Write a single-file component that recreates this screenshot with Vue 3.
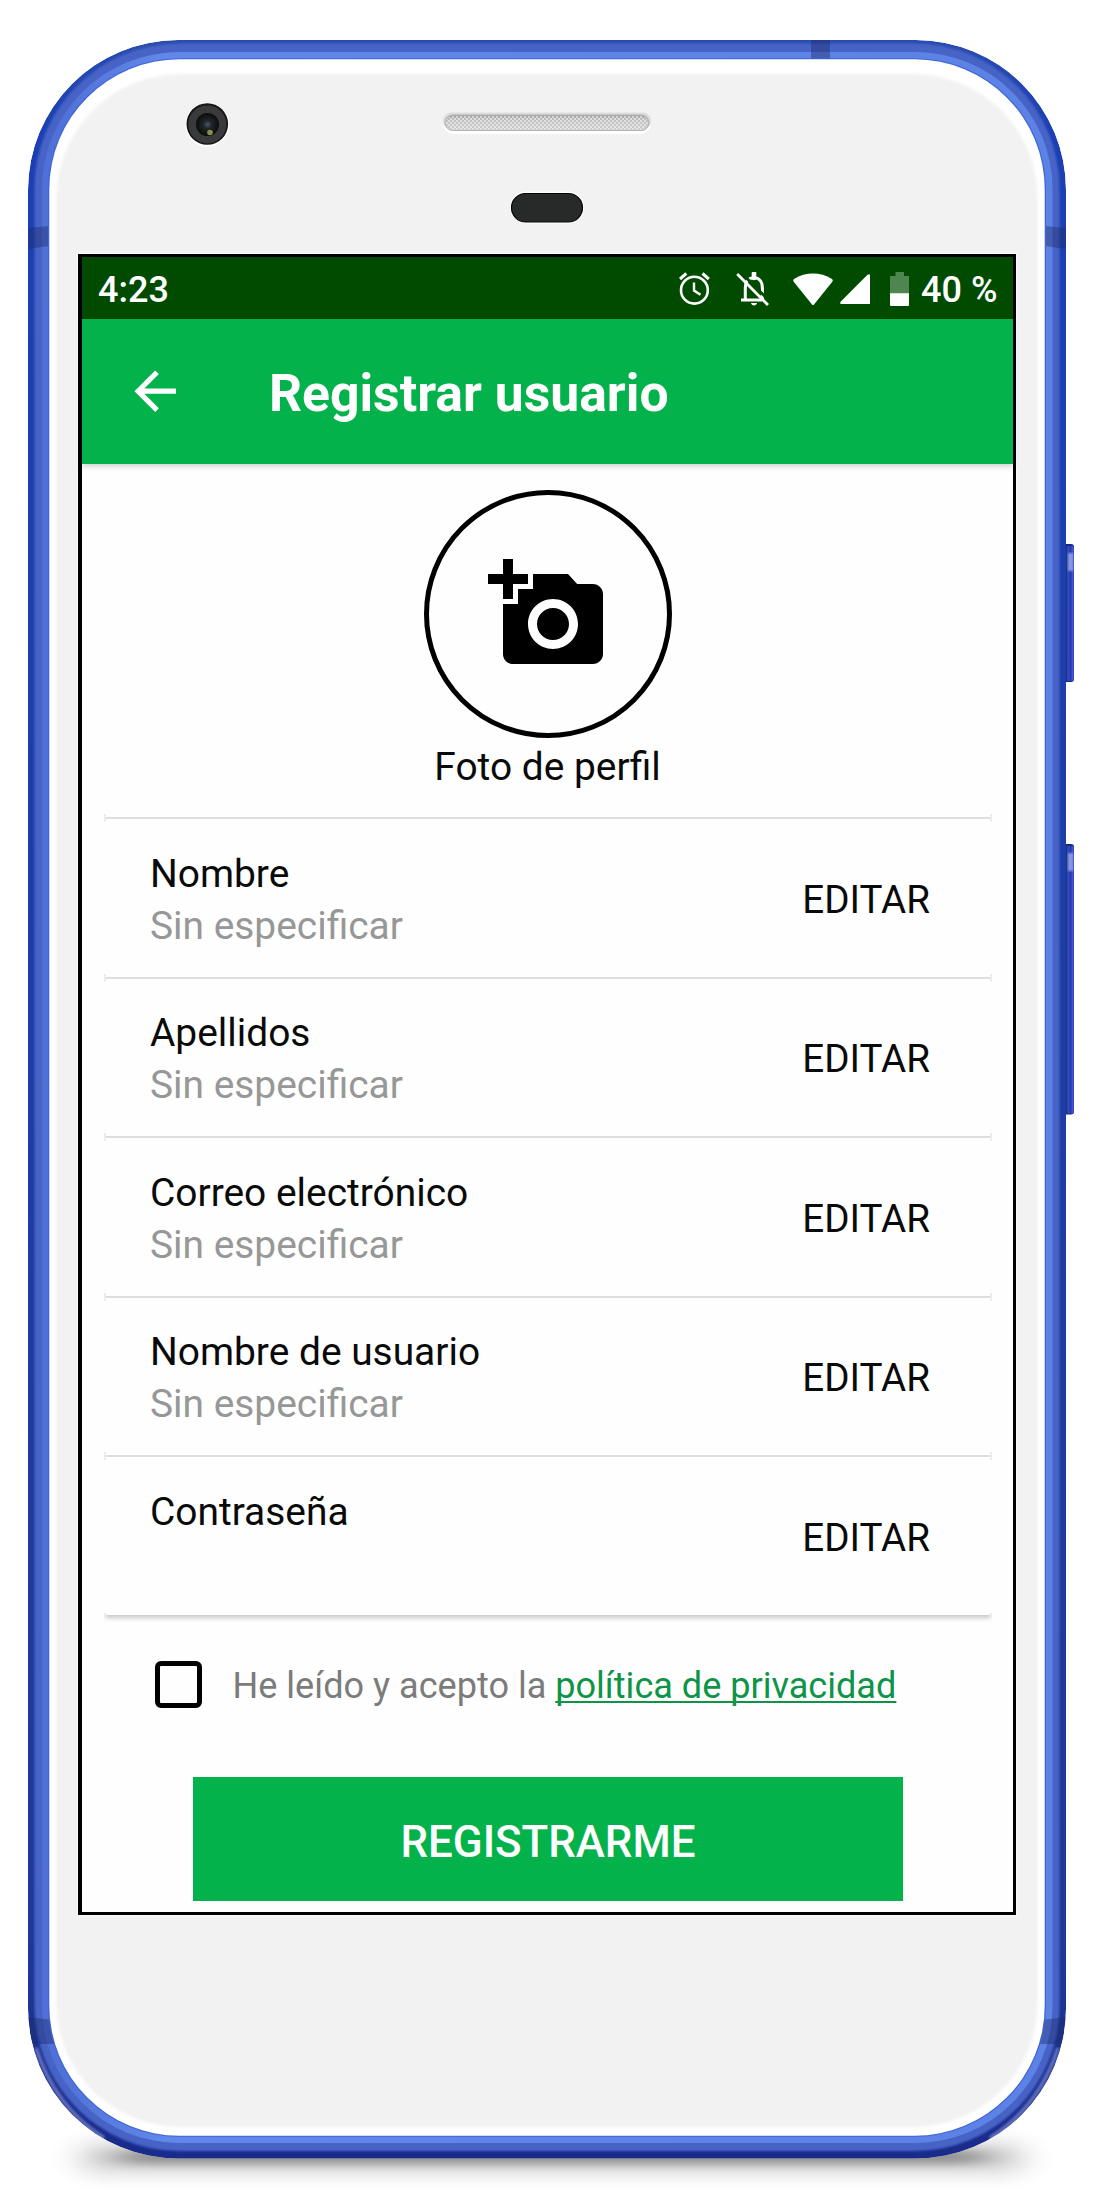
<script setup>
import { ref } from 'vue'

const fields = ref([
  { label: 'Nombre', value: 'Sin especificar' },
  { label: 'Apellidos', value: 'Sin especificar' },
  { label: 'Correo electrónico', value: 'Sin especificar' },
  { label: 'Nombre de usuario', value: 'Sin especificar' },
  { label: 'Contraseña', value: '' },
])

const accepted = ref(false)

const keys = [
  { y: 544, h: 138 },
  { y: 844, h: 270.5 },
]
</script>

<template>
  <div class="stage">
    <!-- Phone body -->
    <svg class="hardware" width="1105" height="2193" viewBox="0 0 1105 2193" aria-hidden="true">
      <defs>
        <filter id="soft" filterUnits="userSpaceOnUse" x="0" y="2050" width="1105" height="143"><feGaussianBlur stdDeviation="16 9" /></filter>
        <filter id="contact" filterUnits="userSpaceOnUse" x="0" y="2050" width="1105" height="143"><feGaussianBlur stdDeviation="18 5" /></filter>
        <filter id="edge" x="-2%" y="-2%" width="104%" height="104%"><feGaussianBlur stdDeviation="1.6" /></filter>
        <filter id="blur1" x="-5%" y="-5%" width="110%" height="110%"><feGaussianBlur stdDeviation="0.8" /></filter>
        <linearGradient id="rim" x1="0" y1="0" x2="0" y2="1">
          <stop offset="0" stop-color="#2b4cb0" />
          <stop offset="0.04" stop-color="#1c40b4" />
          <stop offset="0.9" stop-color="#1e3896" />
          <stop offset="1" stop-color="#192b8c" />
        </linearGradient>
        <linearGradient id="bevel" x1="0" y1="0" x2="1" y2="0">
          <stop offset="0" stop-color="#4f70d6" />
          <stop offset="0.02" stop-color="#5072d8" />
          <stop offset="0.12" stop-color="#6187ea" />
          <stop offset="0.98" stop-color="#5d82e6" />
        </linearGradient>
        <linearGradient id="key" x1="0" y1="0" x2="1" y2="0">
          <stop offset="0" stop-color="#172a80" />
          <stop offset="0.25" stop-color="#3550b8" />
          <stop offset="0.6" stop-color="#2038b4" />
          <stop offset="0.85" stop-color="#4a5cd8" />
          <stop offset="1" stop-color="#2439a0" />
        </linearGradient>
        <linearGradient id="grille" x1="0" y1="0" x2="0" y2="1">
          <stop offset="0" stop-color="#a0a0a0" />
          <stop offset="0.3" stop-color="#bebebe" />
          <stop offset="1" stop-color="#cecece" />
        </linearGradient>
        <radialGradient id="lens">
          <stop offset="0" stop-color="#4a5664" />
          <stop offset="0.35" stop-color="#23272a" />
          <stop offset="1" stop-color="#0b0c0c" />
        </radialGradient>
        <pattern id="mesh" width="4" height="4" patternUnits="userSpaceOnUse">
          <rect x="0" y="0" width="2" height="2" fill="#fff" opacity="0.5" />
          <rect x="2" y="2" width="2" height="2" fill="#fff" opacity="0.5" />
        </pattern>
        <clipPath id="body"><rect x="28" y="40" width="1038" height="2118.5" rx="150" /></clipPath>
      </defs>

      <rect x="78" y="2142" width="948" height="32" rx="16" fill="#000" opacity="0.16" filter="url(#soft)" />
      <rect x="118" y="2150" width="868" height="14" rx="7" fill="#000" opacity="0.34" filter="url(#contact)" />

      <g v-for="k in keys" :key="k.y">
        <rect x="1062" :y="k.y" width="12" :height="k.h" rx="3" fill="#172a80" />
        <rect x="1066" :y="k.y + 2" width="8" :height="k.h - 3" rx="2" fill="url(#key)" />
        <rect x="1068" :y="k.y + 9" width="5" height="18" fill="#b4c0f4" opacity="0.7" filter="url(#blur1)" />
      </g>

      <g clip-path="url(#body)">
        <rect x="28" y="40" width="1038" height="2118.5" rx="150" fill="url(#rim)" />
        <rect x="34.5" y="43.5" width="1025" height="2107.5" rx="145" fill="#4664c6" filter="url(#blur1)" />
        <rect x="42" y="52" width="1010.5" height="2091" rx="137" fill="url(#bevel)" />
        <path d="M36 2048C50 2092 76 2120 104 2138M1058 2048C1044 2092 1018 2120 990 2138" fill="none" stroke="#8f97d8" stroke-width="4" opacity="0.6" filter="url(#blur1)" />
        <g fill="#1c2c6c" opacity="0.42">
          <path d="M28 228L49 226V246L28 249ZM1066 228L1045 226V246L1066 249Z" />
          <path d="M28 2017L52 2020L56 2044L32 2044ZM1066 2017L1042 2020L1038 2044L1062 2044Z" />
          <rect x="811" y="40" width="19" height="20" />
        </g>
      </g>
      <rect x="48" y="58.3" width="998" height="2078.4" rx="131" fill="#4065d6" />
      <rect x="49.3" y="59.3" width="995.4" height="2076.4" rx="130" fill="#fff" />
      <rect x="56.5" y="74" width="981" height="2053" rx="124" fill="#f2f2f2" filter="url(#edge)" />

      <!-- Front camera -->
      <circle cx="207.3" cy="124.8" r="22" fill="#fff" />
      <circle cx="207.3" cy="124" r="20.8" fill="#161616" />
      <circle cx="207.3" cy="124.4" r="19" fill="#3a3a3c" />
      <circle cx="207.5" cy="124.5" r="11.5" fill="url(#lens)" />
      <circle cx="210" cy="132.5" r="2.8" fill="#858f4c" />

      <!-- Speaker -->
      <rect x="443" y="113" width="208" height="21" rx="10.5" fill="#fff" />
      <rect x="443" y="112.5" width="208" height="17" rx="8.5" fill="#dcdcdc" />
      <rect x="445" y="115" width="204" height="15.5" rx="7.7" fill="url(#grille)" stroke="#b5b5b5" />
      <rect x="446" y="116" width="202" height="13.5" rx="6.7" fill="url(#mesh)" />

      <!-- Proximity sensor -->
      <rect x="510" y="191.5" width="74" height="32" rx="16" fill="#fff" />
      <rect x="511.5" y="193.5" width="71" height="28.5" rx="14.2" fill="#282a29" stroke="#050505" stroke-width="1.2" />
    </svg>

    <main class="screen">
      <header class="status">
        <span class="clock">4:23</span>
        <div class="indicators">
          <svg class="alarm" width="31" height="34" viewBox="0 0 31 34" fill="none" stroke="#fff">
            <circle cx="15.4" cy="18.2" r="13.4" stroke-width="2.6" />
            <path d="M1 7L7.3 1.5M29.8 7L23.5 1.5" stroke-width="3" />
            <path d="M15 10.5V18.6L21.5 22.8" stroke-width="2.4" />
          </svg>
          <svg class="muted" width="34" height="35" viewBox="0 0 34 35" fill="none" stroke="#fff">
            <path d="M5 28H26M9.3 28V16C9.3 9 13 5.8 18 5.8S26.4 9.5 26.4 16V28" stroke-width="3" />
            <path d="M18 1.2V6" stroke-width="4.6" stroke-linecap="round" />
            <path d="M15 31H21C20.5 34.3 15.5 34.3 15 31Z" fill="#fff" stroke="none" />
            <path d="M4.5 0L34 29.5" stroke="#004b00" stroke-width="3" />
            <path d="M1.2 2L32 33" stroke-width="2.8" />
          </svg>
          <svg class="wifi" width="40" height="33" viewBox="0 0 40 33" fill="#fff">
            <path d="M1 6C13 -1.3 27 -1.3 39 6Q40.3 7.3 39.3 8.8L21 31.4Q20 32.6 19 31.4L.7 8.8Q-.3 7.3 1 6Z" />
          </svg>
          <svg class="signal" width="30" height="30" viewBox="0 0 30 30" fill="#fff">
            <path d="M27.5 .8Q30 -.8 30 1.6V30H1.5Q-.8 29.6 .8 27.6Z" />
          </svg>
          <svg class="battery" width="19" height="34" viewBox="0 0 19 34">
            <path d="M5.5 0H14V4H19V22H0V4H5.5Z" fill="#4f864f" />
            <path d="M0 21.3H19V33Q19 34 18 34H1Q0 34 0 33Z" fill="#fff" />
          </svg>
          <span class="clock">40 %</span>
        </div>
      </header>

      <nav class="toolbar">
        <svg width="62.4" height="62.4" viewBox="0 0 24 24" fill="#fff">
          <path d="M20 11H7.83l5.59-5.59L12 4l-8 8 8 8 1.41-1.41L7.83 13H20v-2z" />
        </svg>
        <h1>Registrar usuario</h1>
      </nav>

      <section class="photo">
        <div class="avatar">
          <svg width="120" height="120" viewBox="0 0 24 24">
            <path fill-rule="evenodd" d="M3 4V1h2v3h3v2H5v3H3V6H0V4h3zm3 6V7h3V4h7l1.83 2H21c1.1 0 2 .9 2 2v12c0 1.1-.9 2-2 2H5c-1.1 0-2-.9-2-2V10h3zm7 9c2.76 0 5-2.24 5-5s-2.24-5-5-5-5 2.24-5 5 2.24 5 5 5zm-3.2-5c0 1.77 1.43 3.2 3.2 3.2s3.2-1.43 3.2-3.2-1.43-3.2-3.2-3.2-3.2 1.43-3.2 3.2z" />
          </svg>
        </div>
        <span class="caption">Foto de perfil</span>
      </section>

      <section class="fields">
        <article v-for="f in fields" :key="f.label" class="field">
          <div class="info">
            <span class="label">{{ f.label }}</span>
            <span class="value">{{ f.value }}</span>
          </div>
          <span class="edit">EDITAR</span>
        </article>
      </section>

      <div class="terms">
        <span class="box" :class="{ on: accepted }" @click="accepted = !accepted"></span>
        <p>He leído y acepto la <a>política de privacidad</a></p>
      </div>

      <button class="submit">REGISTRARME</button>
    </main>
  </div>
</template>

<style>
body { margin: 0; background: #fff; }
</style>

<style scoped>
.stage {
  position: relative;
  box-sizing: border-box;
  width: 1105px;
  height: 2193px;
  padding: 254px 89px 0 78px;
  overflow: hidden;
  font-family: Roboto, "Liberation Sans", sans-serif;
  color: #0a0a0a;
}
.hardware { position: absolute; left: 0; top: 0; }

.screen {
  position: relative;
  box-sizing: border-box;
  width: 938px;
  height: 1661px;
  border: 3px solid #000;
  border-left-width: 4px;
  background: #fefefe;
  box-shadow: 0 0 0 1px #fafafa;
  display: flex;
  flex-direction: column;
}

.status {
  box-sizing: border-box;
  height: 62px;
  flex: none;
  padding: 2px 15.5px 0 16px;
  background: #004b00;
  color: #fff;
  display: flex;
  align-items: center;
  justify-content: space-between;
  font-size: 36px;
  font-weight: 500;
  line-height: 42px;
}
.clock { margin-top: 2px; }
.indicators { display: flex; align-items: center; }
.alarm { margin-right: 26px; }
.muted { margin-right: 23.5px; }
.wifi { margin-right: 7px; }
.signal { margin-right: 20px; }
.battery { margin-right: 12px; }

.toolbar {
  height: 145px;
  flex: none;
  padding-left: 42px;
  background: #03b24a;
  color: #fff;
  display: flex;
  align-items: center;
  gap: 82.5px;
  box-shadow: 0 2px 6px rgba(0, 0, 0, 0.2);
}
.toolbar h1 { margin: 4.5px 0 0; font-size: 51.7px; font-weight: 700; line-height: 60px; }

.photo {
  height: 353px;
  flex: none;
  display: flex;
  flex-direction: column;
  align-items: center;
}
.avatar {
  box-sizing: border-box;
  width: 248px;
  height: 248px;
  margin-top: 26px;
  border: 5px solid #000;
  border-radius: 50%;
  display: flex;
  align-items: center;
  justify-content: center;
}
.caption { margin-top: 7px; font-size: 38.9px; line-height: 44px; }

.fields {
  flex: none;
  margin: 0 21px 0 22px;
  border-radius: 4px;
  box-shadow: 0 4px 5px -1px rgba(0, 0, 0, 0.22);
  clip-path: inset(-5px 0 -12px 0);
}
.field {
  position: relative;
  box-sizing: border-box;
  height: 159.5px;
  padding: 0 62px 0 46px;
  border-top: 2px solid #dedede;
  display: flex;
  justify-content: space-between;
}
/* rounded ends where two stacked cards meet */
.field::before, .field::after {
  content: "";
  position: absolute;
  top: -5px;
  width: 2px;
  height: 8px;
  background: #ececec;
}
.field::before { left: 0; }
.field::after { right: 0; }
.info { display: flex; flex-direction: column; padding-top: 28.5px; }
.label, .value { font-size: 38.9px; line-height: 52.3px; }
.value { color: #979797; }
.edit { padding-top: 54.5px; font-size: 38.6px; line-height: 52px; }

.terms {
  flex: none;
  height: 47px;
  margin: 46px 0 0 73px;
  display: flex;
  align-items: center;
  gap: 30.5px;
}
.box { box-sizing: border-box; width: 47px; height: 47px; border: 5px solid #000; border-radius: 6px; }
.box.on { background: #03b24a; }
.terms p { margin: 4px 0 0; font-size: 36.1px; line-height: 42px; color: #7b7b7b; white-space: nowrap; }
.terms a {
  color: #0d9447;
  text-decoration: underline;
  text-decoration-thickness: 2px;
  text-underline-offset: 3px;
  text-decoration-skip-ink: none;
}

.submit {
  flex: none;
  width: 710px;
  height: 124px;
  margin: 69.5px 0 0 111px;
  padding: 5px 0 0;
  border: 0;
  background: #03b24a;
  color: #fff;
  font-family: inherit;
  font-size: 43.8px;
  font-weight: 500;
  line-height: 52px;
}
</style>
